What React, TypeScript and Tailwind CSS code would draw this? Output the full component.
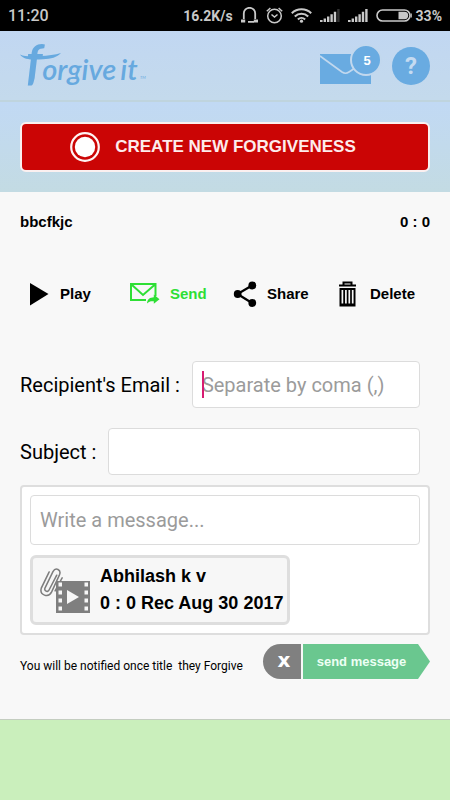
import React from "react";

const sans = "font-['Liberation_Sans',Arial,sans-serif]";

function StatusBar() {
  return (
    <div className="flex h-[31px] items-center justify-between bg-black px-2 text-sm font-bold text-[#c9c9c9]">
      <span className="text-base font-medium">11:20</span>
      <div className="flex items-center gap-2">
        <span>16.2K/s</span>
        <svg width="17" height="17" viewBox="0 0 17 17" fill="none" stroke="currentColor" strokeWidth="1.8" aria-hidden="true">
          <path d="M2.800 12V6.500a5.700 5.700 0 0 1 11.400 0V12M7 14.800h6" />
          <path d="M0 14h4.200M12.800 14H17" strokeWidth="3" />
        </svg>
        <svg width="17" height="17" viewBox="0 0 17 17" fill="none" stroke="currentColor" strokeWidth="1.5" aria-hidden="true">
          <circle cx="8.5" cy="9" r="6.8" />
          <path d="M5.5 7.5l3 2.6 3-2.6M.8 4.2 4.4 1M16.2 4.2 12.6 1" />
        </svg>
        <svg width="21" height="15" viewBox="0 0 21 15" fill="none" stroke="currentColor" strokeWidth="2.1" aria-hidden="true">
          <path d="M.8 5.2a14 14 0 0 1 19.4 0M3.8 8.4a9.6 9.6 0 0 1 13.4 0M6.9 11.4a5.2 5.2 0 0 1 7.2 0" />
          <circle cx="10.5" cy="13.2" r="1.6" fill="currentColor" stroke="none" />
        </svg>
        <SignalBars full={false} />
        <SignalBars full />
        <div className="flex items-center gap-1">
          <svg width="36" height="13" viewBox="0 0 36 13" fill="none" aria-hidden="true">
            <rect x="1" y="1" width="33" height="11" rx="5.5" stroke="currentColor" strokeWidth="1.6" />
            <path d="M22.5 2.8h6a3.7 3.7 0 0 1 0 7.4h-6z" fill="currentColor" />
            <path d="M35.2 4.5v4" stroke="currentColor" strokeWidth="1.2" />
          </svg>
          <span>33%</span>
        </div>
      </div>
    </div>
  );
}

function SignalBars({ full }: { full: boolean }) {
  return (
    <svg width="20" height="13" viewBox="0 0 20 13" fill="currentColor" aria-hidden="true">
      <path d="M0 11h2.6v2H0zM3.6 9.4h2.4V13H3.6zM7 7.4h2.4V13H7zM10.4 5.2h2.4V13h-2.4zM13.8 2.8h2.4V13h-2.4z" />
      <path d="M17.2 0h2.4v13h-2.4z" fill={full ? "currentColor" : "#333"} />
    </svg>
  );
}

function Logo() {
  return (
    <svg width="128" height="54" viewBox="0 0 128 54" fill="#67a9df" overflow="visible" role="img" aria-label="forgive it" className="font-['Lato',sans-serif] italic">
      <text x="6" y="41" fontSize="29" fontWeight="600">
        <tspan fontSize="49" fontWeight="700">f</tspan>
        <tspan>orgive</tspan>
        <tspan dx="4">it</tspan>
      </text>
      <path d="M0 15.500c5 2.400 12 2.100 20 1.600 8-.4 15-1 21-3-4 4.500-10 5.800-18 6.200C14 20.800 4 21.500 0 15.500z" />
      <text x="120" y="40" fontSize="4">TM</text>
    </svg>
  );
}

function Header() {
  return (
    <header className="flex h-[71px] items-center justify-between border-b-2 border-[#bfd4de] bg-linear-to-b from-[#c1d7f2] to-[#c4daec] px-5">
      <Logo />
      <div className="flex items-center gap-3">
        <button type="button" aria-label="Messages, 5 unread" className="pb-1">
          <svg width="60" height="40" viewBox="0 0 60 40" overflow="visible" aria-hidden="true">
            <path d="M0 10h51v30H0z" fill="#69abe1" />
            <path d="M0 12l22 16q3.500 2.400 7 0l12-8" fill="none" stroke="#c2d8ee" strokeWidth="1.600" />
            <circle cx="46" cy="16" r="15" fill="#69abe1" stroke="#c2d8ee" strokeWidth="2" />
            <text x="47" y="21" textAnchor="middle" fontSize="13" fontWeight="700" fill="#fff" className="font-['Liberation_Sans',sans-serif]">5</text>
          </svg>
        </button>
        <button type="button" aria-label="Help" className="flex size-[38px] items-center justify-center rounded-full bg-[#69abe1] text-2xl font-bold text-[#c5dbf1]">
          ?
        </button>
      </div>
    </header>
  );
}

function Actions() {
  const label = `text-[15px] font-bold ${sans}`;
  return (
    <div className="mt-[49px] grid grid-cols-[110fr_97fr_103fr_100fr] text-black">
      <button type="button" className="flex items-center gap-[10px]">
        <svg width="30" height="26" viewBox="0 0 30 26" aria-hidden="true"><path d="M10 2l18.500 11L10 24.500z" fill="currentColor" /></svg>
        <span className={label}>Play</span>
      </button>
      <button type="button" className="flex items-center gap-[10px] text-[#2edf35]">
        <svg width="30" height="26" viewBox="0 0 30 26" fill="none" stroke="currentColor" strokeWidth="2" aria-hidden="true">
          <path d="M16 19H1V3h24.500v12M1.500 3.500 13 14 25 3.500" />
          <path d="M17 22.500c.4-4.500 3-6 6.800-6.200v-2.800l5.700 4.800-5.700 4.400v-2.500c-3-.2-5 .3-6.800 2.300z" fill="currentColor" stroke="none" />
        </svg>
        <span className={label}>Send</span>
      </button>
      <button type="button" className="flex items-center gap-[10px]">
        <svg width="30" height="26" viewBox="0 0 30 26" fill="currentColor" aria-hidden="true">
          <path d="M25 4.500 10.500 13 25 22" fill="none" stroke="currentColor" strokeWidth="2.200" />
          <circle cx="25.300" cy="4.500" r="3.900" /><circle cx="10.700" cy="13" r="3.900" /><circle cx="25.300" cy="22" r="3.900" />
        </svg>
        <span className={label}>Share</span>
      </button>
      <button type="button" className="flex items-center gap-[10px]">
        <svg width="30" height="26" viewBox="0 0 30 26" aria-hidden="true">
          <path d="M9 4.500h17M13.500 4V1.500h8V4" fill="none" stroke="currentColor" strokeWidth="2" />
          <path d="M9.500 7h16v18.500h-16z" fill="currentColor" />
          <path d="M12.400 9v13.500M15.900 9v13.500M19.300 9v13.500M22.700 9v13.500" stroke="#f8f8f8" strokeWidth="1.700" />
        </svg>
        <span className={label}>Delete</span>
      </button>
    </div>
  );
}

function AttachmentIcon() {
  return (
    <svg width="50" height="50" viewBox="0 0 50 50" className="shrink-0" aria-hidden="true">
      <path
        d="M15.500 8.500 8.500 22c-1.400 3-5 1-3.800-1.800L12 5.200c2.500-4.500 8-1.800 6 3L10.800 24c-3 6-11.500 3-9.600-3.500L8.500 5.500M20.500 11l-6.500 12"
        transform="translate(0 1) scale(1.080)" fill="none" stroke="#7d7d7d" strokeWidth="1.400" strokeLinecap="round"
      />
      <path d="M16 16h34v32H16z" fill="#7f7f7f" />
      <path d="M18.500 17.500h3.500v4h-3.500zM18.500 25.500h3.500v4h-3.500zM18.500 33.500h3.500v4h-3.500zM18.500 41.500h3.500v4h-3.500zM44.500 17.500h3.500v4h-3.500zM44.500 25.500h3.500v4h-3.500zM44.500 33.500h3.500v4h-3.500zM44.500 41.500h3.500v4h-3.500z" fill="#f7f7f7" />
      <path d="M27 25v14l12-7z" fill="#f7f7f7" />
    </svg>
  );
}

export default function App() {
  const field = "w-full min-w-0 rounded-sm border border-[#dcdcdc] bg-white px-[9px] text-xl outline-none placeholder:text-[#9b9b9b]";
  return (
    <div className="flex min-h-screen flex-col bg-[#f8f8f8] font-['Roboto',sans-serif] text-black">
      <StatusBar />
      <Header />
      <div className="bg-linear-to-b from-[#c1d9f4] to-[#c3dbe3] px-5 py-5">
        <button type="button" className={`flex h-[50px] w-full items-center justify-center gap-[15px] rounded-md border-2 border-[#fbf0f0] bg-[#cb0505] pr-6 text-[17px] font-bold text-[#fdecec] ${sans}`}>
          <svg width="30" height="30" viewBox="0 0 30 30" aria-hidden="true">
            <circle cx="15" cy="15" r="13.800" fill="none" stroke="#fff3f3" strokeWidth="2.200" />
            <circle cx="15" cy="15" r="10.200" fill="#fff" />
          </svg>
          CREATE NEW FORGIVENESS
        </button>
      </div>

      <main className="px-5 pt-5 pb-10">
        <div className={`flex justify-between text-[15px] leading-5 font-bold ${sans}`}>
          <h1>bbcfkjc</h1>
          <span>0 : 0</span>
        </div>
        <Actions />

        <form onSubmit={(e) => e.preventDefault()}>
          <div className="mt-[54px] flex items-center gap-3 pr-[10px]">
            <label htmlFor="email" className="shrink-0 text-xl">Recipient's Email :</label>
            <div className="relative min-w-0 flex-1">
              <input id="email" type="text" placeholder="Separate by coma (,)" className={`${field} h-[47px]`} />
              <span className="absolute top-[10px] left-[10px] h-[27px] w-[2px] bg-[#d81b72]" />
            </div>
          </div>
          <div className="mt-5 flex items-center gap-3 pr-[10px]">
            <label htmlFor="subject" className="shrink-0 text-xl">Subject :</label>
            <input id="subject" type="text" className={`${field} h-[47px]`} />
          </div>

          <div className="mt-[10px] rounded-sm border-2 border-[#dedede] bg-white p-2">
            <input type="text" aria-label="Message" placeholder="Write a message..." className={`${field} h-[50px]`} />
            <div className="mt-[10px] flex h-[70px] w-fit items-center gap-[10px] rounded-md border-3 border-[#dedede] bg-[#f7f7f7] pr-1 pl-[7px]">
              <AttachmentIcon />
              <div className={`text-lg leading-[27px] font-bold ${sans}`}>
                <p>Abhilash k v</p>
                <p>0 : 0 Rec Aug 30 2017</p>
              </div>
            </div>
          </div>

          <div className="mt-[9px] flex items-center justify-between">
            <p className="pt-2 text-[12px] whitespace-pre">You will be notified once title  they Forgive</p>
            <div className={`flex h-[35px] gap-[2px] font-bold text-white ${sans}`}>
              <button type="button" aria-label="Cancel" className="w-[38px] rounded-l-full bg-[#808080] pb-1 pl-1 font-['DejaVu_Sans',sans-serif] text-xl">x</button>
              <button type="submit" className="w-[127px] bg-[#6ac78f] pr-[10px] text-[13px] text-[#edfff4] [clip-path:polygon(0_0,115px_0,100%_50%,115px_100%,0_100%)]">send message</button>
            </div>
          </div>
        </form>
      </main>
      <footer className="min-h-20 flex-1 border-t border-[#c4cdc0] bg-[#caefbc]" />
    </div>
  );
}
